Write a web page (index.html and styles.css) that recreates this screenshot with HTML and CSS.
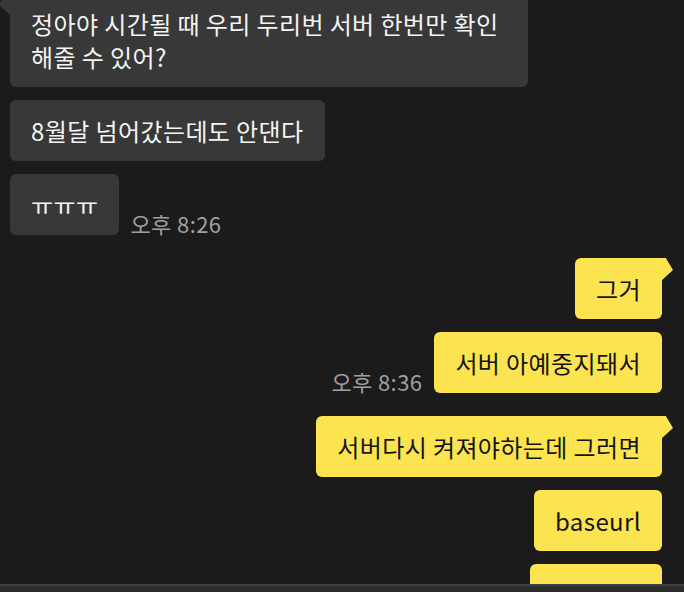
FILE: index.html
```html
<!DOCTYPE html>
<html>
<head>
	<meta charset="utf-8">
	<title>채팅</title>
	<link rel="stylesheet" href="styles.css">
</head>
<body>
	<div class="chat">
		<div class="row in first">
			<div class="bubble">정아야 시간될 때 우리 두리번 서버 한번만 확인 해줄 수 있어?</div>
		</div>
		<div class="row in">
			<div class="bubble">8월달 넘어갔는데도 안댄다</div>
		</div>
		<div class="row in">
			<div class="bubble">ㅠㅠㅠ</div>
			<span class="time">오후 8:26</span>
		</div>

		<div class="row out first group">
			<div class="bubble">그거</div>
		</div>
		<div class="row out">
			<span class="time">오후 8:36</span>
			<div class="bubble">서버 아예중지돼서</div>
		</div>

		<div class="row out first group">
			<div class="bubble">서버다시 켜져야하는데 그러면</div>
		</div>
		<div class="row out">
			<div class="bubble">baseurl</div>
		</div>
		<div class="row out">
			<div class="bubble">바뀌기도</div>
		</div>
	</div>
	<div class="bottom-bar"></div>
</body>
</html>
```

FILE: styles.css
```css
* {
	margin: 0;
	box-sizing: border-box;
}
html, body {
	height: 100%;
}
body {
	background-color: #1b1b1b;
	font-family: "Noto Sans CJK KR", "Noto Sans", sans-serif;
	display: flex;
	flex-direction: column;
	overflow: hidden;
}
.chat {
	flex: 1;
	overflow: hidden;
	display: flex;
	flex-direction: column;
	gap: 13px;
	padding: 0 22px 0 10px;
	margin-top: -7px;
}
.row {
	display: flex;
	align-items: flex-end;
	gap: 11px;
}
.row.out {
	justify-content: flex-end;
	gap: 12px;
}
.row.group {
	margin-top: 10px;
}
.bubble {
	position: relative;
	max-width: 518px;
	padding: 14px 21px 14px 21px;
	font-size: 24px;
	letter-spacing: 0.4px;
	line-height: 33px;
	border-radius: 6px;
	flex-shrink: 0;
}
.in .bubble {
	background-color: #383838;
	color: #f4f4f4;
}
.out .bubble {
	background-color: #fbe44f;
	color: #141414;
}
.first .bubble::before {
	content: "";
	position: absolute;
	top: 0;
	width: 12px;
	height: 24px;
}
.in.first .bubble {
	border-top-left-radius: 0;
}
.in.first .bubble::before {
	left: -11px;
	background-color: #383838;
	clip-path: polygon(100% 0, 60% 0, 0 50%, 100% 96%);
}
.out.first .bubble {
	border-top-right-radius: 0;
}
.out.first .bubble::before {
	right: -11px;
	background-color: #fbe44f;
	clip-path: polygon(0 0, 40% 0, 100% 50%, 0 96%);
}
.time {
	font-size: 22px;
	letter-spacing: 0.4px;
	color: #a0a0a0;
	line-height: 24px;
	padding-bottom: 0;
	white-space: nowrap;
}
.bottom-bar {
	height: 8px;
	background-color: #2c2c2c;
	border-top: 2px solid #3e3e3e;
	flex-shrink: 0;
}
```
